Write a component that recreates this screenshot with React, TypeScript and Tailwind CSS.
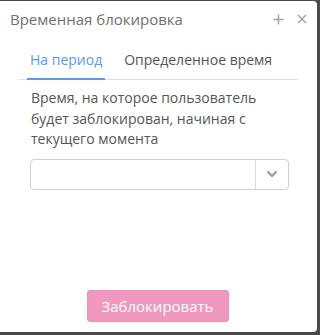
import React, { useState } from "react";

const App = () => {
  const [tab, setTab] = useState(0);

  return (
    <div className="w-[320px] h-[335px] bg-[#4a4a4a] pt-px pr-[3px] pb-[3px] font-['Open_Sans',sans-serif]">
      <div className="h-full bg-white rounded-r-[4px] flex flex-col">
        <div className="flex items-center justify-between h-[36px] pl-[10px] pr-[10px]">
          <h1 className="text-[15px] text-[#6f6f6f] leading-none">Временная блокировка</h1>
          <div className="flex items-center gap-[13px] text-[#a0a0a0]">
            <svg width="11" height="11" viewBox="0 0 11 11">
              <path d="M5.5 0.5V10.5M0.5 5.5H10.5" stroke="currentColor" strokeWidth="1.4" />
            </svg>
            <svg width="10" height="10" viewBox="0 0 10 10">
              <path d="M1 1L9 9M9 1L1 9" stroke="currentColor" strokeWidth="1.4" />
            </svg>
          </div>
        </div>

        <div className="mx-[19px] mt-[13px] flex border-b border-[#dedede] pl-[8px] gap-[16px]">
          <button
            onClick={() => setTab(0)}
            className={
              tab === 0
                ? "px-[3px] pb-[8px] text-[14px] leading-[20px] -mb-px border-b-2 border-[#5a9be6] text-[#5a9be6]"
                : "px-[3px] pb-[8px] text-[14px] leading-[20px] -mb-px border-b-2 border-transparent text-[#555]"
            }
          >
            На период
          </button>
          <button
            onClick={() => setTab(1)}
            className={
              tab === 1
                ? "px-[3px] pb-[8px] text-[14px] leading-[20px] -mb-px border-b-2 border-[#5a9be6] text-[#5a9be6]"
                : "px-[3px] pb-[8px] text-[14px] leading-[20px] -mb-px border-b-2 border-transparent text-[#555]"
            }
          >
            Определенное время
          </button>
        </div>

        <div className="px-[30px] mt-[8px]">
          <p className="text-[14px] leading-[20.5px] text-[#555] pl-px">
            Время, на которое пользователь будет заблокирован, начиная с текущего момента
          </p>
          <div className="mt-[9px] h-[31px] w-[259px] border border-[#cfcfcf] rounded-[4px] flex">
            <div className="flex-1" />
            <div className="w-[33px] border-l border-[#dcdcdc] flex items-center justify-center">
              <svg width="12" height="8" viewBox="0 0 12 8">
                <path d="M1.5 1.5L6 6L10.5 1.5" stroke="#999" strokeWidth="2.2" fill="none" />
              </svg>
            </div>
          </div>
        </div>

        <div className="mt-auto mb-[10px] flex justify-center pr-[2px]">
          <button className="w-[142px] h-[32px] rounded-[3px] bg-[#f098bd] border border-[#ec90b6] text-white text-[15px]">
            Заблокировать
          </button>
        </div>
      </div>
    </div>
  );
};

export default App;
